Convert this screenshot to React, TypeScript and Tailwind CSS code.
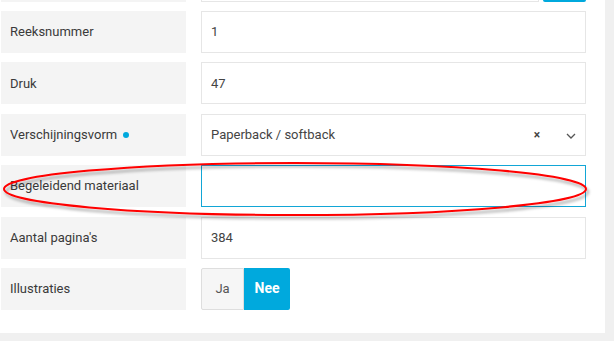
import React from "react";

function Row({ label, children, dot }: { label: string; children: React.ReactNode; dot?: boolean }) {
  return (
    <div className="grid grid-cols-[185px_385px] gap-x-[15px] h-[42px] shrink-0">
      <div className="bg-[#f4f4f4] flex items-center pl-[9px] text-[13px] text-[#3a3a3a]">
        {label}
        {dot && <span className="ml-[6px] w-[6px] h-[6px] rounded-full bg-[#00a9dd] inline-block" />}
      </div>
      {children}
    </div>
  );
}

function TextBox({ value, focused }: { value?: string; focused?: boolean }) {
  return (
    <div
      className={
        "border flex items-center pl-[9px] text-[13px] text-[#444] bg-white " +
        (focused ? "border-[#12a6d6]" : "border-[#e6e6e6]")
      }
    >
      {value}
    </div>
  );
}

export default function App() {
  return (
    <div className="w-[614px] h-[341px] bg-[#f0f0f0] overflow-hidden" style={{ fontFamily: "Roboto, 'Liberation Sans', sans-serif" }}>
      <div className="relative w-[605px] h-[333px] bg-white overflow-hidden pl-px flex flex-col gap-[9.4px]">
        <div className="grid grid-cols-[185px_385px] gap-x-[15px] h-[42px] shrink-0 mt-[-40.4px]">
          <div className="bg-[#f4f4f4]" />
          <div className="flex gap-[4px]">
            <div className="flex-1 border border-[#e6e6e6]" />
            <div className="w-[43px] bg-[#00a9dd] rounded-[2px]" />
          </div>
        </div>
        <Row label="Reeksnummer">
          <TextBox value="1" />
        </Row>
        <Row label="Druk">
          <TextBox value="47" />
        </Row>
        <Row label="Verschijningsvorm" dot>
          <div className="border border-[#e6e6e6] flex items-center pl-[9px] text-[13px] text-[#444]">
            <span className="flex-1">Paperback / softback</span>
            <span className="text-[12px] font-bold text-[#444] mr-[26px]">×</span>
            <svg width="10" height="6" viewBox="0 0 10 6" className="mr-[9px] mt-[3px]">
              <path d="M1 1 L5 5 L9 1" fill="none" stroke="#555" strokeWidth="1.3" />
            </svg>
          </div>
        </Row>
        <Row label="Begeleidend materiaal">
          <TextBox focused />
        </Row>
        <Row label="Aantal pagina's">
          <TextBox value="384" />
        </Row>
        <Row label="Illustraties">
          <div className="flex">
            <div className="w-[43px] bg-[#f6f6f6] border border-[#dedede] rounded-l-[2px] flex items-center justify-center text-[13px] text-[#555]">
              Ja
            </div>
            <div className="w-[46px] bg-[#00a9dd] rounded-r-[2px] flex items-center justify-center text-[14px] font-bold text-white">
              Nee
            </div>
          </div>
        </Row>
        <svg className="absolute left-0 top-0 pointer-events-none" width="614" height="341">
          <defs>
            <filter id="sh" x="-10%" y="-50%" width="120%" height="200%">
              <feDropShadow dx="2" dy="3" stdDeviation="1.5" floodColor="#000" floodOpacity="0.35" />
            </filter>
          </defs>
          <ellipse cx="295" cy="189" rx="291" ry="26" fill="none" stroke="#ff0000" strokeWidth="2" filter="url(#sh)" />
        </svg>
      </div>
    </div>
  );
}
